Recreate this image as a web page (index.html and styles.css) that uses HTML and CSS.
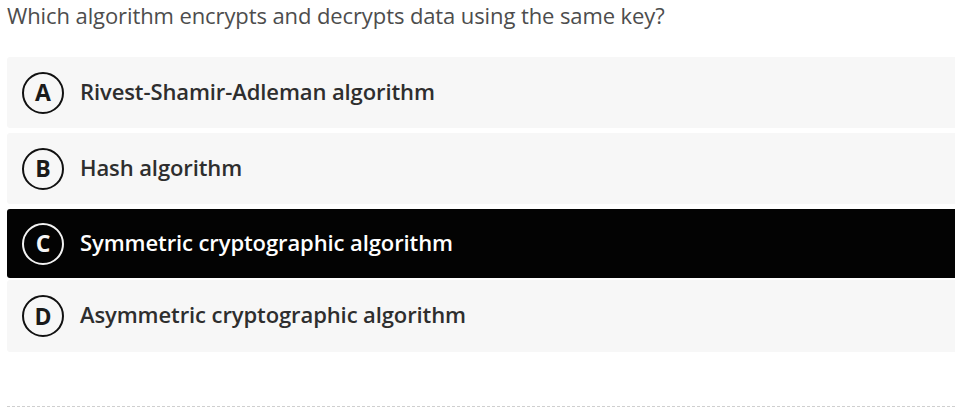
FILE: index.html
```html
<!DOCTYPE html>
<html>
<head>
<meta charset="utf-8">
<link rel="stylesheet" href="styles.css">
</head>
<body>
<div class="quiz">
  <p class="question">Which algorithm encrypts and decrypts data using the same key?</p>
  <div class="options">
    <div class="option"><span class="letter">A</span><span class="label">Rivest-Shamir-Adleman algorithm</span></div>
    <div class="option"><span class="letter">B</span><span class="label">Hash algorithm</span></div>
    <div class="option selected"><span class="letter">C</span><span class="label">Symmetric cryptographic algorithm</span></div>
    <div class="option last"><span class="letter">D</span><span class="label">Asymmetric cryptographic algorithm</span></div>
  </div>
  <div class="divider"></div>
</div>
</body>
</html>
```
FILE: styles.css
```css
html, body {
  margin: 0;
  padding: 0;
  background: #ffffff;
}
.quiz {
  padding-left: 7px;
  font-family: "Open Sans", "Noto Sans", sans-serif;
}
.question {
  margin: 0;
  padding-top: 0;
  height: 57px;
  font-size: 22px;
  line-height: 30px;
  color: #4d4d4d;
  letter-spacing: -0.1px;
}
.options {
  display: flex;
  flex-direction: column;
  gap: 5px;
}
.option {
  display: flex;
  align-items: center;
  height: 71px;
  padding-left: 15px;
  background: #f7f7f7;
  border-radius: 3px 0 0 3px;
  color: #2e2e2e;
}
.option.selected {
  background: #030303;
  color: #ffffff;
  height: 69px;
  margin-bottom: -3px;
}
.option.last {
  height: 72px;
}
.letter {
  box-sizing: border-box;
  width: 42px;
  height: 42px;
  border: 2px solid #111111;
  border-radius: 50%;
  display: flex;
  align-items: center;
  justify-content: center;
  font-size: 23px;
  font-weight: 700;
  line-height: 1;
  flex: none;
  color: #1a1a1a;
}
.selected .letter {
  border-color: #f2f2f2;
  color: #f5f5f5;
}
.label {
  margin-left: 16px;
  padding-bottom: 4px;
  font-size: 22px;
  font-weight: 600;
  letter-spacing: -0.1px;
}
.divider {
  margin-top: 54px;
  border-top: 1px dashed #cfcfcf;
}
```
